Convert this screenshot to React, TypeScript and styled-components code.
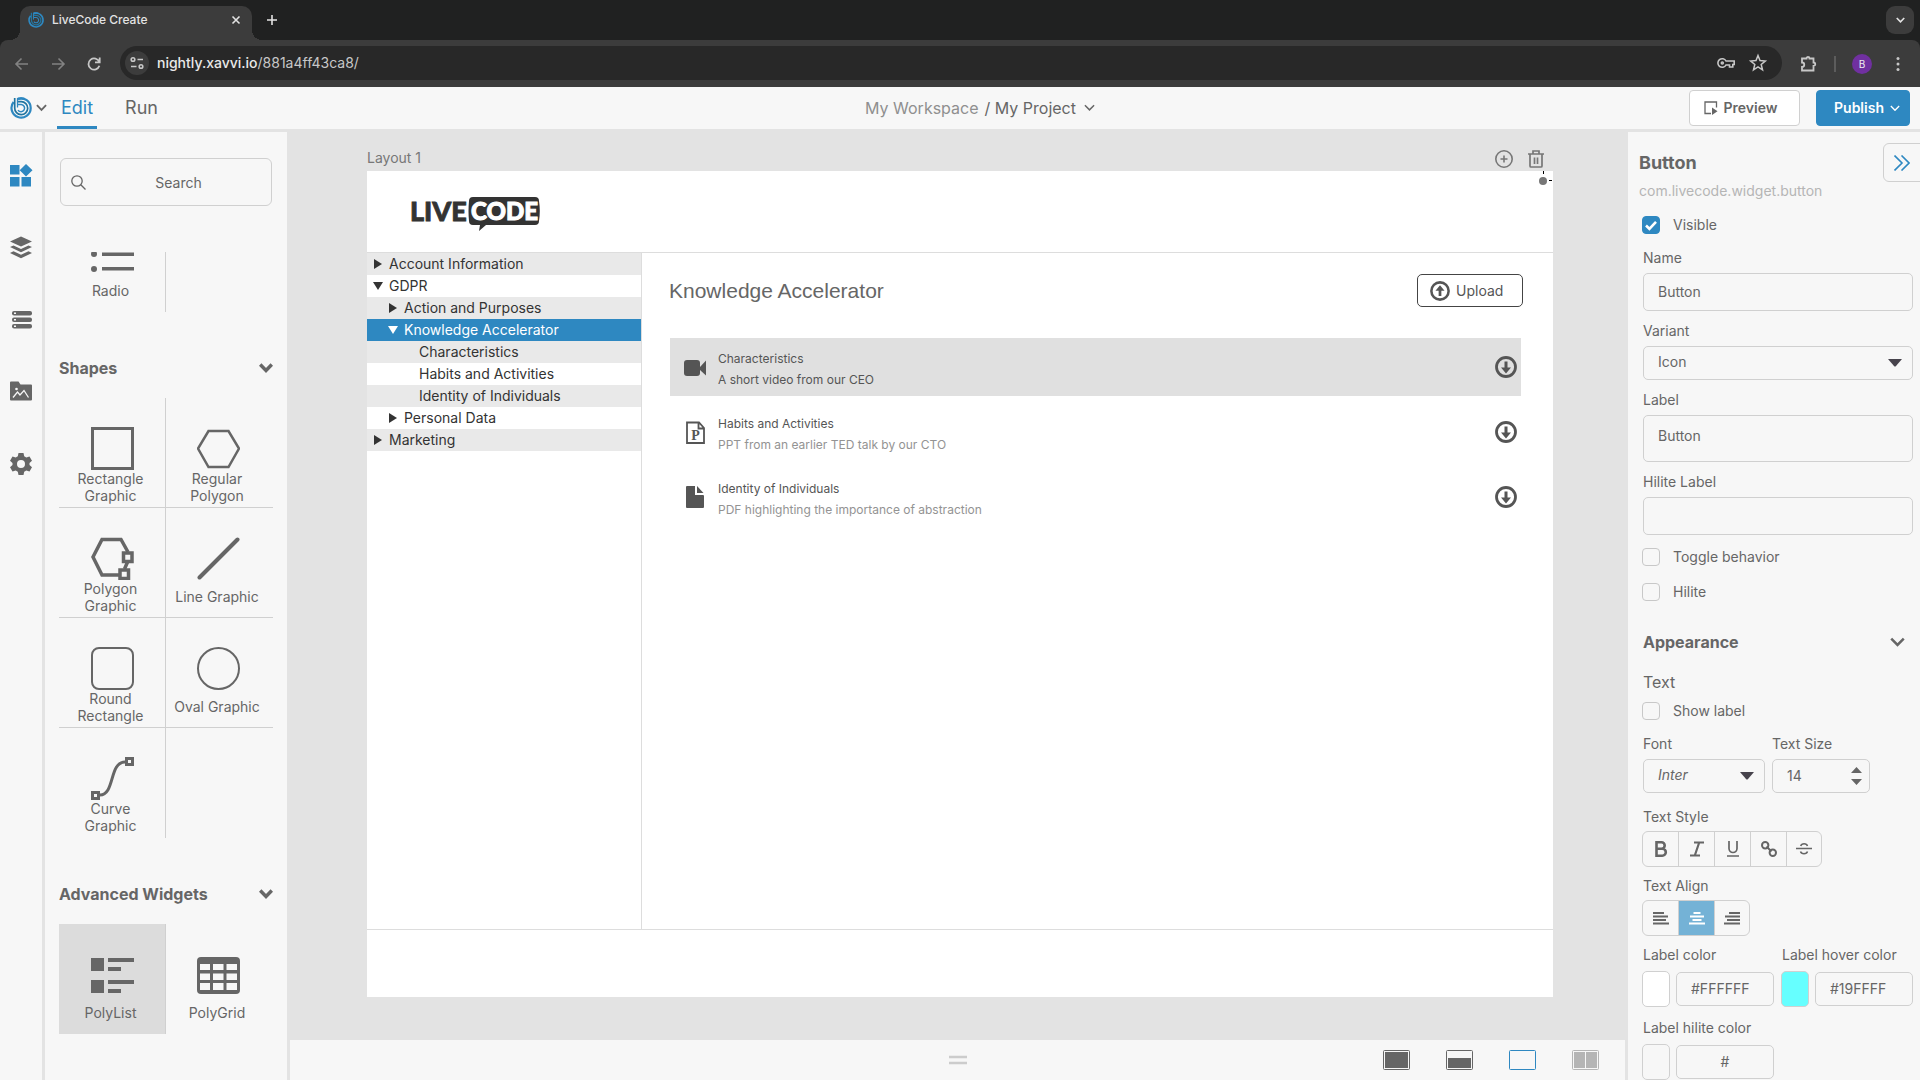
import React from "react";
import styled, { createGlobalStyle } from "styled-components";

const ink = "#666666";
const blue = "#2e88c1";
const surface = "#f7f7f7";
const line = "#d0d0d0";
const backdrop = "#e3e3e3";

const GlobalStyle = createGlobalStyle`
  *, *::before, *::after { box-sizing: border-box; }
  body {
    margin: 0;
    font-family: Inter, "Liberation Sans", sans-serif;
    font-size: 14px;
    line-height: 20px;
    color: ${ink};
  }
  button, input, select, textarea { font: inherit; color: inherit; margin: 0; }
  button { background: none; border: 0; padding: 0; cursor: pointer; }
  svg { display: block; flex: none; }
`;

const Page = styled.div`
  display: flex;
  flex-direction: column;
  height: 100vh;
  overflow: hidden;
  background: ${surface};
`;

/* ---------- Browser frame ---------- */

const TabStrip = styled.div`
  display: flex;
  align-items: center;
  height: 40px;
  flex: none;
  padding: 6px 6px 0 20px;
  background: #202121;
  color: #e3e3e3;
`;

const Tab = styled.div`
  position: relative;
  display: flex;
  align-items: center;
  gap: 8px;
  width: 232px;
  height: 34px;
  padding: 0 10px 6px 8px;
  border-radius: 10px 10px 0 0;
  background: #3c3c3c;
  font-size: 12px;
  font-weight: 500;
  &::before, &::after {
    content: "";
    position: absolute;
    bottom: 0;
    width: 10px;
    height: 10px;
  }
  &::before { left: -10px; background: radial-gradient(circle at 0 0, transparent 10px, #3c3c3c 10px); }
  &::after { right: -10px; background: radial-gradient(circle at 100% 0, transparent 10px, #3c3c3c 10px); }
`;

const TabTitle = styled.span`
  flex: 1;
`;

const NewTab = styled.button`
  margin: 0 auto 6px 12px;
`;

const TabSearch = styled.button`
  display: grid;
  place-items: center;
  width: 28px;
  height: 28px;
  margin-bottom: 6px;
  border-radius: 9px;
  background: #3c3c3c;
`;

const BrowserBarBack = styled.div`
  flex: none;
  background: #202121;
`;

const BrowserBar = styled.div`
  display: flex;
  align-items: center;
  gap: 16px;
  height: 47px;
  padding: 0 12px;
  border-radius: 8px 8px 0 0;
  background: #3c3c3c;
  color: #c7c7c7;
`;

const Address = styled.div`
  display: flex;
  align-items: center;
  flex: 1;
  gap: 12px;
  height: 34px;
  margin: 0 0 1px 0;
  padding: 0 14px 0 5px;
  border-radius: 17px;
  background: #282828;
`;

const SiteChip = styled.button`
  display: grid;
  place-items: center;
  width: 24px;
  height: 24px;
  margin-right: -4px;
  border-radius: 50%;
  background: #3c3c3c;
`;

const AddressText = styled.span`
  flex: 1;
  color: #c7c7c7;
  b { font-weight: 500; color: #e8e8e8; }
`;

const BarDivider = styled.span`
  width: 2px;
  height: 16px;
  background: #5c5c5c;
`;

const Avatar = styled.span`
  display: grid;
  place-items: center;
  width: 20px;
  height: 20px;
  border-radius: 50%;
  background: #7030a0;
  color: #eee;
  font-size: 10px;
`;

/* ---------- Application header ---------- */

const Header = styled.header`
  display: grid;
  grid-template-columns: 1fr auto 1fr;
  align-items: center;
  height: 45px;
  flex: none;
  padding: 0 10px;
  border-bottom: 3px solid ${backdrop};
`;

const HeaderLeft = styled.div`
  display: flex;
  align-items: center;
  align-self: stretch;
`;

const LogoButton = styled.button`
  display: flex;
  align-items: center;
  gap: 4px;
  margin-right: 10px;
`;

const Modes = styled.nav`
  display: flex;
  align-self: stretch;
  gap: 24px;
`;

const Mode = styled.a<{ $on?: boolean }>`
  padding: 9px 4px 0;
  border-bottom: 3px solid ${(p) => (p.$on ? blue : "transparent")};
  color: ${(p) => (p.$on ? blue : ink)};
  font-size: 18px;
  line-height: 24px;
  text-decoration: none;
`;

const Crumbs = styled.button`
  display: flex;
  align-items: center;
  gap: 6px;
  padding-left: 40px;
  font-size: 16px;
  span { color: #8f8f8f; }
  svg { margin-left: 2px; }
`;

const HeaderRight = styled.div`
  display: flex;
  justify-content: flex-end;
  gap: 16px;
`;

const Action = styled.button<{ $primary?: boolean }>`
  display: flex;
  align-items: center;
  justify-content: center;
  gap: 6px;
  width: ${(p) => (p.$primary ? 94 : 111)}px;
  height: 36px;
  padding: ${(p) => (p.$primary ? "0 0 0 8px" : "0 8px 0 0")};
  border: 1px solid ${(p) => (p.$primary ? blue : line)};
  border-radius: 4px;
  background: ${(p) => (p.$primary ? blue : "#ffffff")};
  color: ${(p) => (p.$primary ? "#ffffff" : ink)};
  font-weight: 600;
`;

/* ---------- Workspace ---------- */

const Workspace = styled.div`
  display: flex;
  flex: 1;
  min-height: 0;
`;

const Rail = styled.nav`
  display: flex;
  flex-direction: column;
  gap: 48px;
  width: 45px;
  flex: none;
  padding: 32px 9px;
  border-right: 3px solid ${backdrop};
`;

const RailButton = styled.button<{ $on?: boolean }>`
  width: 24px;
  height: 24px;
  color: ${(p) => (p.$on ? blue : ink)};
`;

const Library = styled.aside`
  width: 242px;
  flex: none;
  padding: 26px 14px 0 14px;
`;

const SearchBox = styled.label`
  display: flex;
  align-items: center;
  height: 48px;
  margin: 0 1px;
  padding-left: 10px;
  border: 1px solid ${line};
  border-radius: 6px;
  input {
    flex: 1;
    min-width: 0;
    border: 0;
    padding: 2px 0 0 14px;
    background: none;
    text-align: center;
  }
  input::placeholder { color: ${ink}; opacity: 1; }
`;

const ScrolledRow = styled.div`
  display: grid;
  grid-template-columns: 107px 107px;
  align-content: end;
  height: 60px;
  margin-top: 46px;
  overflow: hidden;
`;

const SectionTitle = styled.h2`
  display: flex;
  align-items: center;
  justify-content: space-between;
  margin: 44px 0 18px;
  font-size: 16px;
  line-height: 24px;
  font-weight: 700;
`;

const TileGrid = styled.div`
  display: grid;
  grid-template-columns: 107px 107px;
`;

const Tile = styled.button<{ $right?: boolean; $bottom?: boolean; $selected?: boolean }>`
  display: flex;
  flex-direction: column;
  align-items: center;
  height: 110px;
  padding: 29px ${(p) => (p.$right ? 0 : 2)}px 0 0;
  border-right: ${(p) => (p.$right ? 1 : 0)}px solid ${line};
  border-bottom: ${(p) => (p.$bottom ? 1 : 0)}px solid ${line};
  background: ${(p) => (p.$selected ? "#dcdcdc" : "transparent")};
`;

const TileLabel = styled.span`
  display: flex;
  align-items: center;
  height: 33px;
  padding-right: 3px;
  line-height: 17px;
  white-space: pre-line;
`;

const Center = styled.main`
  display: flex;
  flex-direction: column;
  flex: 1;
  min-width: 0;
  background: ${backdrop};
`;

const CanvasArea = styled.div`
  display: flex;
  flex-direction: column;
  flex: 1;
  min-height: 0;
  padding: 13px 75px 43px 80px;
`;

const LayoutBar = styled.div`
  display: flex;
  align-items: center;
  gap: 12px;
  height: 26px;
  padding-right: 7px;
  color: #777777;
`;

const LayoutName = styled.span`
  flex: 1;
`;

const Board = styled.section`
  position: relative;
  display: flex;
  flex-direction: column;
  flex: 1;
  min-height: 0;
  background: #ffffff;
  color: #333333;
`;

const Handle = styled.svg`
  position: absolute;
  top: 0;
  right: 0;
`;

const BoardHeader = styled.header`
  height: 82px;
  padding: 20px 40px;
  border-bottom: 1px solid #dddddd;
`;

const BoardBody = styled.div`
  display: flex;
  flex: 1;
`;

const BoardFooter = styled.footer`
  height: 68px;
  border-top: 1px solid #dddddd;
`;

const Tree = styled.ul`
  width: 275px;
  flex: none;
  margin: 0;
  padding: 0;
  border-right: 1px solid #dddddd;
  list-style: none;
`;

const TreeRow = styled.li<{ $level: number; $shade?: boolean; $on?: boolean }>`
  display: flex;
  align-items: center;
  gap: 4px;
  height: 22px;
  padding-left: ${(p) => 6 + p.$level * 15}px;
  background: ${(p) => (p.$on ? blue : p.$shade ? "#e9e9e9" : "#ffffff")};
  color: ${(p) => (p.$on ? "#ffffff" : "#333333")};
`;

const TreeMark = styled.span`
  width: 12px;
`;

const Content = styled.div`
  flex: 1;
  padding: 21px 32px 0 28px;
`;

const ContentHead = styled.div`
  display: flex;
  align-items: center;
  justify-content: space-between;
  height: 33px;
  margin: 0 -2px 31px -1px;
`;

const ContentTitle = styled.h1`
  margin: 0;
  color: ${ink};
  font-family: "Liberation Sans", Arial, sans-serif;
  font-size: 21px;
  line-height: 26px;
  font-weight: 400;
`;

const Upload = styled.button`
  display: flex;
  align-items: center;
  gap: 6px;
  width: 106px;
  height: 33px;
  padding-left: 12px;
  border: 1px solid #444444;
  border-radius: 5px;
  color: #555555;
`;

const FileList = styled.ul`
  display: flex;
  flex-direction: column;
  gap: 7px;
  margin: 0;
  padding: 0;
  list-style: none;
`;

const FileRow = styled.li<{ $on?: boolean }>`
  display: flex;
  align-items: center;
  gap: 11px;
  height: 58px;
  padding: 0 4px 0 13px;
  background: ${(p) => (p.$on ? "#e0e0e0" : "#ffffff")};
  color: #555555;
`;

const FileText = styled.div<{ $on?: boolean }>`
  flex: 1;
  padding-top: 4px;
  font-size: 12px;
  line-height: 21px;
  p { margin: 0; }
  p + p { color: ${(p) => (p.$on ? "#555555" : "#939393")}; }
`;

const BottomBar = styled.footer`
  display: grid;
  grid-template-columns: 1fr auto 1fr;
  align-items: center;
  height: 40px;
  flex: none;
  margin: 0 3px;
  background: ${surface};
`;

const ViewButtons = styled.div`
  display: flex;
  justify-content: flex-end;
  gap: 36px;
  padding-right: 26px;
`;

/* ---------- Property inspector ---------- */

const Inspector = styled.aside`
  width: 292px;
  flex: none;
  padding: 11px 7px 0 14px;
  overflow: hidden;
`;

const InspectorHead = styled.div`
  display: flex;
  justify-content: space-between;
  margin: 0 -8px 15px -3px;
  h2 {
    margin: 8px 0 6px;
    font-size: 18px;
    line-height: 24px;
    font-weight: 700;
  }
  p { margin: 0; color: #b5b5b5; }
`;

const Collapse = styled.button`
  display: grid;
  place-items: center;
  width: 38px;
  height: 39px;
  border: 1px solid ${line};
  border-radius: 6px 0 0 6px;
  color: ${blue};
`;

const Check = styled.label<{ $after: number }>`
  display: flex;
  align-items: center;
  gap: 13px;
  height: 18px;
  margin-bottom: ${(p) => p.$after}px;
  input {
    appearance: none;
    width: 18px;
    height: 18px;
    border: 1px solid #c8c8c8;
    border-radius: 4px;
  }
  input:checked {
    border-color: ${blue};
    background: ${blue} url("data:image/svg+xml,%3Csvg xmlns='http://www.w3.org/2000/svg' viewBox='0 0 16 16'%3E%3Cpath d='M3 8.5l3.4 3.3L13 4.8' fill='none' stroke='white' stroke-width='2.6'/%3E%3C/svg%3E");
  }
`;

const Field = styled.div<{ $after?: number; $gap?: number }>`
  position: relative;
  display: flex;
  flex-direction: column;
  gap: ${(p) => p.$gap ?? 5}px;
  margin-bottom: ${(p) => p.$after ?? 10}px;
  > label, > span { padding-left: 1px; }
`;

const box = `
  width: 100%;
  padding: 0 14px;
  border: 1px solid ${line};
  border-radius: 5px;
  background: ${surface};
  outline: none;
`;

const TextInput = styled.input<{ $h: number; $align?: string }>`
  ${box}
  height: ${(p) => p.$h}px;
  min-width: 0;
  padding-bottom: 2px;
  text-align: ${(p) => p.$align ?? "left"};
  appearance: textfield;
  &::-webkit-inner-spin-button { appearance: none; }
`;

const TextArea = styled.textarea`
  ${box}
  height: 47px;
  padding-top: 10px;
  resize: none;
  overflow: hidden;
`;

const Select = styled.select<{ $italic?: boolean }>`
  ${box}
  height: 34px;
  padding-bottom: 2px;
  appearance: none;
  font-style: ${(p) => (p.$italic ? "italic" : "normal")};
`;

const Control = styled.div<{ $inset?: number }>`
  position: relative;
  display: flex;
  margin-left: 1px;
  > svg {
    position: absolute;
    right: ${(p) => p.$inset ?? 11}px;
    top: 50%;
    transform: translateY(-50%);
    pointer-events: none;
  }
`;

const GroupTitle = styled.h3`
  display: flex;
  align-items: center;
  justify-content: space-between;
  margin: 29px 8px 16px 1px;
  font-size: 16px;
  line-height: 24px;
  font-weight: 700;
`;

const SubTitle = styled.h4`
  margin: 0 0 8px 1px;
  font-size: 16px;
  line-height: 24px;
  font-weight: 400;
`;

const FontRow = styled.div`
  display: grid;
  grid-template-columns: 123px 99px;
  gap: 6px;
`;

const Segments = styled.div`
  display: flex;
  align-self: flex-start;
  border: 1px solid ${line};
  border-radius: 6px;
  overflow: hidden;
`;

const Segment = styled.button<{ $on?: boolean }>`
  display: grid;
  place-items: center;
  width: 36px;
  height: 34px;
  background: ${(p) => (p.$on ? "#74b2d6" : "transparent")};
  color: ${(p) => (p.$on ? "#ffffff" : ink)};
  & + & { border-left: 1px solid ${line}; }
  &:first-child, &:last-child { width: 35px; }
`;

const ColorGrid = styled.div`
  display: grid;
  grid-template-columns: 132px 132px;
  column-gap: 7px;
`;

const ColorRow = styled.div`
  display: flex;
  align-items: center;
  gap: 6px;
`;

const Swatch = styled.button<{ $fill: string }>`
  width: 28px;
  height: 36px;
  flex: none;
  border: 1px solid ${line};
  border-radius: 5px;
  background: ${(p) => p.$fill};
`;

/* ---------- Icons ---------- */

type StrokeProps = { w: number; h?: number; box?: string; sw?: number; children: React.ReactNode };
const Stroke = ({ w, h = w, box: vb, sw = 2, children }: StrokeProps) => (
  <svg width={w} height={h} viewBox={vb ?? `0 0 ${w} ${h}`} fill="none" stroke="currentColor" strokeWidth={sw}>
    {children}
  </svg>
);

const Chevron = ({ w = 12, sw = 2 }: { w?: number; sw?: number }) => (
  <Stroke w={w} h={(w * 2) / 3} box="0 0 12 8" sw={sw}>
    <path d="M1 1.3L6 6.4L11 1.3" />
  </Stroke>
);

const Brand = ({ size }: { size: number }) => (
  <svg width={size} height={size} viewBox="0 0 22 22" fill="none" stroke={blue}>
    <path d="M3.600 5A9.600 9.600 0 1 0 8 1.900" strokeWidth="2.200" />
    <path d="M8 1.900A9.600 9.600 0 0 1 14 1.900" strokeWidth="2.200" />
    <path d="M4.700 1V11a6.500 6.500 0 1 0 6.500-6.300H8" strokeWidth="1.700" stroke="#21749f" />
    <path d="M7.500 1V10.500" strokeWidth="1.300" />
    <path d="M8 7.600H11.200A3.600 3.600 0 1 1 8 13.200" strokeWidth="1.500" />
  </svg>
);

const CaretDown = () => (
  <svg width="14" height="8" viewBox="0 0 14 8" fill="#47434c"><path d="M0 0H14L8 7Q7 8 6 7Z" /></svg>
);

const Stepper = () => (
  <svg width="11" height="18" viewBox="0 0 11 18" fill={ink}><path d="M0 6L5.5 0L11 6ZM0 12H11L5.5 18Z" /></svg>
);

const LiveCodeLogo = () => (
  <svg width="140" height="42" viewBox="0 0 140 42" role="img" aria-label="LiveCode">
    <text x="3" y="30" fill="#333333" stroke="#333333" strokeWidth="0.800" fontFamily="Lato" fontWeight="900" fontSize="27">LIVE</text>
    <path d="M66 6H128Q132 6 132 10Q133.600 20 132 30Q132 34 128 34H79L72 40L73 34H66Q62 34 62 30Q61 20 62 10Q62 6 66 6Z" fill="#333333" />
    <text x="64" y="29" fill="#ffffff" stroke="#ffffff" strokeWidth="1" fontFamily="Lato" fontWeight="900" fontSize="24">CODE</text>
  </svg>
);

const ArrowCircle = ({ size, up }: { size: number; up?: boolean }) => (
  <svg width={size} height={size} viewBox="0 0 22 22">
    <circle cx="11" cy="11" r="9.5" fill="none" stroke="#555555" strokeWidth="2.8" />
    <path
      d={up ? "M11 4.6L16 10.600H12.500V16.500H9.500V10.600H6Z" : "M11 17.400L16 11.400H12.500V5.500H9.500V11.400H6Z"}
      fill="#555555"
    />
  </svg>
);

const VideoIcon = () => (
  <svg width="24" height="24" viewBox="0 0 24 24" fill="#555555">
    <rect x="1" y="5" width="16" height="16" rx="3" />
    <path d="M17 12L23 5.500V20.500L17 15Z" />
  </svg>
);

const SlideIcon = () => (
  <svg width="24" height="24" viewBox="0 0 24 24">
    <path d="M4 2.500H16L21 8V23H4ZM15.500 2.500V8.500H21" fill="none" stroke="#555555" strokeWidth="1.800" />
    <text x="12.500" y="20" textAnchor="middle" fill="#555555" fontFamily="Liberation Serif" fontWeight="700" fontSize="14">P</text>
  </svg>
);

const DocIcon = () => (
  <svg width="24" height="24" viewBox="0 0 24 24" fill="#555555">
    <path d="M4 1H12V10H20Q21 10 21 11V22Q21 23 20 23H4Q3 23 3 22V2Q3 1 4 1Z" />
    <path d="M14 1L20.500 8H14Z" />
  </svg>
);

const shapeIcons: Record<string, React.ReactNode> = {
  radio: (
    <g fill={ink}>
      <circle cx="3" cy="9" r="3" /><circle cx="3" cy="23" r="3" /><circle cx="3" cy="38" r="3" />
      <path d="M11 7H43V11H11ZM11 21.500H43V25H11ZM11 36H43V39.500H11Z" />
    </g>
  ),
  rect: <rect x="1.500" y="1.500" width="40" height="40" strokeWidth="3" />,
  hexagon: <path d="M11.500 4H31.500L42 21.500L31.500 40H11.500L1 21.500Z" strokeWidth="2.500" />,
  polygon: (
    <g strokeWidth="3.500">
      <path d="M37 15L30 2.500H11L2 20L11 38H28M33.500 32L37 24" />
      <path d="M32.500 16H41V24.500H32.500ZM29 33H37.500V41.500H29Z" fill={surface} />
    </g>
  ),
  line: <path d="M2.500 40.500L40.500 2.500" strokeWidth="4" strokeLinecap="round" />,
  round: <rect x="1" y="1" width="41" height="41" rx="7" strokeWidth="2" />,
  oval: <circle cx="21.500" cy="21.500" r="20.500" strokeWidth="2" />,
  curve: (
    <g strokeWidth="3">
      <path d="M9 38C24 38 18 5 34 5" />
      <path d="M1.500 35.500H7.500V41.500H1.500ZM35.500 1.500H41.500V7.500H35.500Z" />
    </g>
  ),
  polylist: (
    <path
      d="M0 5H13V18H0ZM17 5H43V9H17ZM17 14H30V18H17ZM0 27H13V40H0ZM17 27H43V31H17ZM17 36H30V40H17Z"
      fill={ink}
      stroke="none"
    />
  ),
  polygrid: (
    <g>
      <rect x="0" y="4" width="43" height="37" rx="4" fill={ink} stroke="none" />
      <path
        d="M3 11H13V17H3ZM16 11H26.500V17H16ZM29.500 11H40V17H29.500ZM3 20.500H13V27H3ZM16 20.500H26.500V27H16ZM29.500 20.500H40V27H29.500ZM3 30H13V37H3ZM16 30H26.500V37H16ZM29.500 30H40V37H29.500Z"
        fill={surface}
        stroke="none"
      />
    </g>
  ),
};

const ShapeIcon = ({ name }: { name: string }) => (
  <svg width="43" height="43" viewBox="0 0 43 43" fill="none" stroke={name === "radio" ? "none" : ink}>
    {shapeIcons[name]}
  </svg>
);

const railIcons: { label: string; art: React.ReactNode }[] = [
  { label: "Widgets", art: <path d="M1 1H10.500V10.500H1ZM1 13H10.500V22.500H1ZM12.500 13H22V22.500H12.500ZM17 0L23.500 6.300L17 12.600L10.700 6.300Z" /> },
  {
    label: "Layers",
    art: (
      <path d="M12 0.500L23 5.500L12 10.500L1 5.500ZM1 11L4.500 9.400L12 12.900L19.500 9.400L23 11L12 16.200ZM1 17L4.500 15.300L12 18.800L19.500 15.300L23 17L12 22.300Z" />
    ),
  },
  {
    label: "Structure",
    art: (
      <>
        <rect x="3" y="3" width="20" height="4.500" rx="2" />
        <rect x="3" y="9.500" width="20" height="4.500" rx="2" />
        <rect x="3" y="16" width="20" height="4.500" rx="2" />
        <path d="M5 4.500H7V6H5ZM5 11H7V12.500H5ZM5 17.500H7V19H5Z" fill={surface} />
      </>
    ),
  },
  {
    label: "Assets",
    art: (
      <>
        <path d="M2 1.500H9.500L11.500 4.500H22Q23 4.500 23 5.500V19.500Q23 20.500 22 20.500H2Q1 20.500 1 19.500V2.500Q1 1.500 2 1.500Z" />
        <path d="M4 17.500L8.500 12L11 15L15 10.500L19.500 17.500" fill="none" stroke={surface} strokeWidth="1.300" />
        <circle cx="7.500" cy="9" r="1.300" fill={surface} />
      </>
    ),
  },
  {
    label: "Settings",
    art: (
      <path
        fillRule="evenodd"
        d="M9.500 1H14.500L15.200 4.300L17.300 5.500L20.500 4.500L23 8.800L20.500 11V13L23 15.200L20.500 19.500L17.300 18.500L15.200 19.700L14.500 23H9.500L8.800 19.700L6.700 18.500L3.500 19.500L1 15.200L3.500 13V11L1 8.800L3.500 4.500L6.700 5.500L8.800 4.300ZM12 8A4 4 0 1 0 12 16A4 4 0 1 0 12 8Z"
      />
    ),
  },
];

/* ---------- Data ---------- */

const shapes = [
  { icon: "rect", label: "Rectangle\nGraphic" },
  { icon: "hexagon", label: "Regular\nPolygon" },
  { icon: "polygon", label: "Polygon\nGraphic" },
  { icon: "line", label: "Line Graphic" },
  { icon: "round", label: "Round\nRectangle" },
  { icon: "oval", label: "Oval Graphic" },
  { icon: "curve", label: "Curve\nGraphic" },
];

const tree = [
  { level: 0, label: "Account Information", mark: "closed" },
  { level: 0, label: "GDPR", mark: "open" },
  { level: 1, label: "Action and Purposes", mark: "closed" },
  { level: 1, label: "Knowledge Accelerator", mark: "open", on: true },
  { level: 2, label: "Characteristics" },
  { level: 2, label: "Habits and Activities" },
  { level: 2, label: "Identity of Individuals" },
  { level: 1, label: "Personal Data", mark: "closed" },
  { level: 0, label: "Marketing", mark: "closed" },
];

const files = [
  { icon: <VideoIcon />, title: "Characteristics", note: "A short video from our CEO", on: true },
  { icon: <SlideIcon />, title: "Habits and Activities", note: "PPT from an earlier TED talk by our CTO" },
  { icon: <DocIcon />, title: "Identity of Individuals", note: "PDF highlighting the importance of abstraction" },
];

const alignBars = {
  left: "M0 1H11M0 4.500H15M0 8H13M0 11.500H16",
  center: "M4.500 1H11.500M1 4.500H15M3.500 8H12.500M0 11.500H16",
  right: "M5 1H16M1 4.500H16M3 8H16M0 11.500H16",
};

/* ---------- Sections ---------- */

const Browser = () => (
  <>
    <TabStrip>
      <Tab>
        <Brand size={16} />
        <TabTitle>LiveCode Create</TabTitle>
        <button aria-label="Close tab"><Stroke w={12} sw={1.6}><path d="M2.500 2.500L9.500 9.500M9.500 2.500L2.500 9.500" /></Stroke></button>
      </Tab>
      <NewTab aria-label="New tab"><Stroke w={16} sw={1.6}><path d="M8 3V13M3 8H13" /></Stroke></NewTab>
      <TabSearch aria-label="Search tabs"><Chevron w={9} sw={2.2} /></TabSearch>
    </TabStrip>
    <BrowserBarBack>
      <BrowserBar>
        <Stroke w={20} sw={1.6}><g opacity="0.500"><path d="M16 10H4.500M9.500 4.500L4 10L9.500 15.500" /></g></Stroke>
        <Stroke w={20} sw={1.6}><g opacity="0.500"><path d="M4 10H15.500M10.500 4.500L16 10L10.500 15.500" /></g></Stroke>
        <Stroke w={20} sw={1.8}><path d="M15.300 8A5.600 5.600 0 1 0 15.400 11.800M15.700 3.500V8.300H11" /></Stroke>
        <Address>
          <SiteChip aria-label="Site information">
            <Stroke w={14} sw={1.6}><circle cx="3" cy="3.500" r="1.800" /><path d="M7.500 3.500H13M1 10.500H6.500" /><circle cx="11" cy="10.500" r="1.800" /></Stroke>
          </SiteChip>
          <AddressText><b>nightly.xavvi.io</b>/881a4ff43ca8/</AddressText>
          <Stroke w={20} sw={1.6}>
            <path d="M10 8H18.200V11.500H16.800V14H13.500V12H10A4.300 4.300 0 1 1 10 8Z" /><circle cx="6.300" cy="10" r="1" />
          </Stroke>
          <Stroke w={20} sw={1.5}><path d="M10 2.500L12 7.600L17.300 8L13.200 11.500L14.500 16.800L10 13.900L5.500 16.800L6.800 11.500L2.700 8L8 7.600Z" /></Stroke>
        </Address>
        <Stroke w={20} sw={1.8}><path d="M4 4.500H8.500A1.500 1.500 0 0 1 11.500 4.500H15.500V8.500A1.600 1.600 0 0 1 15.500 12V16.500H4V13A2.200 2.200 0 0 0 4 8.500Z" /></Stroke>
        <BarDivider />
        <Avatar>B</Avatar>
        <svg width="20" height="20" viewBox="0 0 20 20" fill="currentColor"><circle cx="10" cy="4.500" r="1.500" /><circle cx="10" cy="10" r="1.500" /><circle cx="10" cy="15.500" r="1.500" /></svg>
      </BrowserBar>
    </BrowserBarBack>
  </>
);

const AppHeader = () => (
  <Header>
    <HeaderLeft>
      <LogoButton aria-label="LiveCode menu"><Brand size={22} /><Chevron w={11} sw={2} /></LogoButton>
      <Modes><Mode href="#edit" $on>Edit</Mode><Mode href="#run">Run</Mode></Modes>
    </HeaderLeft>
    <Crumbs><span>My Workspace</span>/ My Project <Chevron w={11} sw={1.6} /></Crumbs>
    <HeaderRight>
      <Action>
        <svg width="14" height="14" viewBox="0 0 14 14" fill="none" stroke={ink} strokeWidth="1.300">
          <path d="M7 12.500H1V1H12.500V6.500" /><path d="M8 6.500L13.500 10.200L8 14Z" fill={ink} stroke="none" />
        </svg>
        Preview
      </Action>
      <Action $primary>Publish <Chevron w={10} sw={1.6} /></Action>
    </HeaderRight>
  </Header>
);

const WidgetLibrary = () => (
  <Library>
    <SearchBox>
      <Stroke w={15} sw={1.3}><circle cx="6" cy="6" r="5.200" /><path d="M9.800 9.800L14.500 14.500" /></Stroke>
      <input type="search" placeholder="Search" aria-label="Search widgets" />
    </SearchBox>
    <ScrolledRow>
      <Tile $right><ShapeIcon name="radio" /><TileLabel>Radio</TileLabel></Tile>
    </ScrolledRow>
    <SectionTitle>Shapes <Chevron w={14} sw={3} /></SectionTitle>
    <TileGrid>
      {shapes.map((s, i) => (
        <Tile key={s.label} $right={i % 2 === 0} $bottom={i < 6}>
          <ShapeIcon name={s.icon} /><TileLabel>{s.label}</TileLabel>
        </Tile>
      ))}
    </TileGrid>
    <SectionTitle>Advanced Widgets <Chevron w={14} sw={3} /></SectionTitle>
    <TileGrid>
      <Tile $right $selected><ShapeIcon name="polylist" /><TileLabel>PolyList</TileLabel></Tile>
      <Tile><ShapeIcon name="polygrid" /><TileLabel>PolyGrid</TileLabel></Tile>
    </TileGrid>
  </Library>
);

const Canvas = () => (
  <Center>
    <CanvasArea>
      <LayoutBar>
        <LayoutName>Layout 1</LayoutName>
        <button aria-label="Add layout"><Stroke w={20} sw={1.6}><circle cx="10" cy="11" r="8.200" /><path d="M10 7.500V14.500M6.500 11H13.500" /></Stroke></button>
        <button aria-label="Delete layout">
          <Stroke w={20} sw={1.7}><path d="M2 6H18M7 6V3H13V6M4 6V18Q4 19 5 19H15Q16 19 16 18V6M8.500 9.500V16M11.500 9.500V16" /></Stroke>
        </button>
      </LayoutBar>
      <Board>
        <Handle width="16" height="16" viewBox="0 0 16 16">
          <circle cx="6" cy="10" r="4" fill="#777777" /><path d="M6.500 0V3M12 9.500H15" stroke="#000000" />
        </Handle>
        <BoardHeader><LiveCodeLogo /></BoardHeader>
        <BoardBody>
          <Tree>
            {tree.map((t, i) => (
              <TreeRow key={t.label} $level={t.level} $shade={i % 2 === 0} $on={t.on}>
                <TreeMark>
                  {t.mark && (
                    <svg width="10" height="10" viewBox="0 0 10 10" fill="currentColor">
                      <path d={t.mark === "open" ? "M0 1H10L5 9Z" : "M1 0L9 5L1 10Z"} />
                    </svg>
                  )}
                </TreeMark>
                {t.label}
              </TreeRow>
            ))}
          </Tree>
          <Content>
            <ContentHead>
              <ContentTitle>Knowledge Accelerator</ContentTitle>
              <Upload><ArrowCircle size={20} up />Upload</Upload>
            </ContentHead>
            <FileList>
              {files.map((f) => (
                <FileRow key={f.title} $on={f.on}>
                  {f.icon}
                  <FileText $on={f.on}><p>{f.title}</p><p>{f.note}</p></FileText>
                  <button aria-label={`Download ${f.title}`}><ArrowCircle size={22} /></button>
                </FileRow>
              ))}
            </FileList>
          </Content>
        </BoardBody>
        <BoardFooter />
      </Board>
    </CanvasArea>
    <BottomBar>
      <span />
      <svg width="18" height="10" viewBox="0 0 18 10"><path d="M0 2H18M0 8H18" stroke="#cccccc" strokeWidth="2.500" /></svg>
      <ViewButtons>
        <button aria-label="Full view">
          <svg width="27" height="20" viewBox="0 0 27 20" fill="none" stroke={ink}><rect x="0.500" y="0.500" width="26" height="19" rx="1" /><rect x="2" y="2" width="23" height="16" fill={ink} stroke="none" /></svg>
        </button>
        <button aria-label="Split view">
          <svg width="27" height="20" viewBox="0 0 27 20" fill="none" stroke={ink}><rect x="0.500" y="0.500" width="26" height="19" rx="1" /><rect x="2" y="8" width="23" height="10" fill={ink} stroke="none" /></svg>
        </button>
        <button aria-label="Canvas view">
          <svg width="27" height="20" viewBox="0 0 27 20" fill="none" stroke={blue}><rect x="0.500" y="0.500" width="26" height="19" rx="1" /></svg>
        </button>
        <button aria-label="Side by side view">
          <svg width="27" height="20" viewBox="0 0 27 20" fill="none" stroke="#b5b5b5"><rect x="0.500" y="0.500" width="26" height="19" rx="1" /><path d="M2 2H13V18H2ZM14 2H25V18H14Z" fill="#b5b5b5" stroke="none" /></svg>
        </button>
      </ViewButtons>
    </BottomBar>
  </Center>
);

const ColorField = ({ id, label, fill, value, align }: { id: string; label: string; fill: string; value: string; align?: string }) => (
  <Field $gap={6} $after={11}>
    <label htmlFor={id}>{label}</label>
    <ColorRow>
      <Swatch $fill={fill} aria-label={`${label} swatch`} />
      <TextInput id={id} $h={34} $align={align} defaultValue={value} />
    </ColorRow>
  </Field>
);

const PropertyPanel = () => (
  <Inspector>
    <InspectorHead>
      <div><h2>Button</h2><p>com.livecode.widget.button</p></div>
      <Collapse aria-label="Collapse panel"><Stroke w={16} sw={1.6}><path d="M0.500 0.500L8 8L0.500 15.500M7.500 0.500L15 8L7.500 15.500" /></Stroke></Collapse>
    </InspectorHead>
    <Check $after={14}><input type="checkbox" defaultChecked />Visible</Check>
    <Field>
      <label htmlFor="name">Name</label>
      <Control><TextInput id="name" $h={38} defaultValue="Button" /></Control>
    </Field>
    <Field>
      <label htmlFor="variant">Variant</label>
      <Control><Select id="variant"><option>Icon</option></Select><CaretDown /></Control>
    </Field>
    <Field>
      <label htmlFor="label">Label</label>
      <Control><TextArea id="label" defaultValue="Button" /></Control>
    </Field>
    <Field $after={13}>
      <label htmlFor="hilite">Hilite Label</label>
      <Control><TextInput id="hilite" $h={38} /></Control>
    </Field>
    <Check $after={17}><input type="checkbox" />Toggle behavior</Check>
    <Check $after={0}><input type="checkbox" />Hilite</Check>
    <GroupTitle>Appearance <Chevron w={15} sw={2} /></GroupTitle>
    <SubTitle>Text</SubTitle>
    <Check $after={14}><input type="checkbox" />Show label</Check>
    <FontRow>
      <Field $after={14}>
        <label htmlFor="font">Font</label>
        <Control><Select id="font" $italic><option>Inter</option></Select><CaretDown /></Control>
      </Field>
      <Field $after={14}>
        <label htmlFor="size">Text Size</label>
        <Control $inset={8}><TextInput id="size" type="number" $h={34} defaultValue="14" /><Stepper /></Control>
      </Field>
    </FontRow>
    <Field $gap={4} $after={9}>
      <span>Text Style</span>
      <Segments role="group" aria-label="Text style">
        <Segment aria-label="Bold"><Stroke w={16} sw={2.6}><path d="M3.500 1.300H8.500A3.200 3.200 0 0 1 8.500 7.700H3.500ZM3.500 7.700H9.300A3.500 3.500 0 0 1 9.300 14.700H3.500Z" /></Stroke></Segment>
        <Segment aria-label="Italic"><Stroke w={16} sw={2.2}><path d="M5 1.500H15M1 14.500H11M10.200 1.500L5.800 14.500" /></Stroke></Segment>
        <Segment aria-label="Underline"><Stroke w={16} sw={1.7}><path d="M4 0V7.500A4 4 0 0 0 12 7.500V0M2 15H14" /></Stroke></Segment>
        <Segment aria-label="Link"><Stroke w={16} sw={2}><circle cx="4.200" cy="4.200" r="3.200" /><circle cx="11.800" cy="11.800" r="3.200" /><path d="M5.500 5.500L10.500 10.500" /></Stroke></Segment>
        <Segment aria-label="Strikethrough"><Stroke w={16} sw={1.5}><path d="M0 7.500H16M11.500 5A3.500 2.800 0 0 0 4.700 5M11.500 10.500A3.600 2.900 0 0 1 4.500 10.500" /></Stroke></Segment>
      </Segments>
    </Field>
    <Field $gap={4} $after={9}>
      <span>Text Align</span>
      <Segments role="group" aria-label="Text align">
        <Segment aria-label="Align left"><Stroke w={16} h={13} sw={2}><path d={alignBars.left} /></Stroke></Segment>
        <Segment aria-label="Align center" $on><Stroke w={16} h={13} sw={2}><path d={alignBars.center} /></Stroke></Segment>
        <Segment aria-label="Align right"><Stroke w={16} h={13} sw={2}><path d={alignBars.right} /></Stroke></Segment>
      </Segments>
    </Field>
    <ColorGrid>
      <ColorField id="c1" label="Label color" fill="#ffffff" value="#FFFFFF" />
      <ColorField id="c2" label="Label hover color" fill="#66ffff" value="#19FFFF" />
      <ColorField id="c3" label="Label hilite color" fill={surface} value="#" align="center" />
    </ColorGrid>
  </Inspector>
);

export default function App() {
  return (
    <Page>
      <GlobalStyle />
      <Browser />
      <AppHeader />
      <Workspace>
        <Rail>
          {railIcons.map((r, i) => (
            <RailButton key={r.label} aria-label={r.label} $on={i === 0}>
              <svg width="24" height="24" viewBox="0 0 24 24" fill="currentColor">{r.art}</svg>
            </RailButton>
          ))}
        </Rail>
        <WidgetLibrary />
        <Canvas />
        <PropertyPanel />
      </Workspace>
    </Page>
  );
}
